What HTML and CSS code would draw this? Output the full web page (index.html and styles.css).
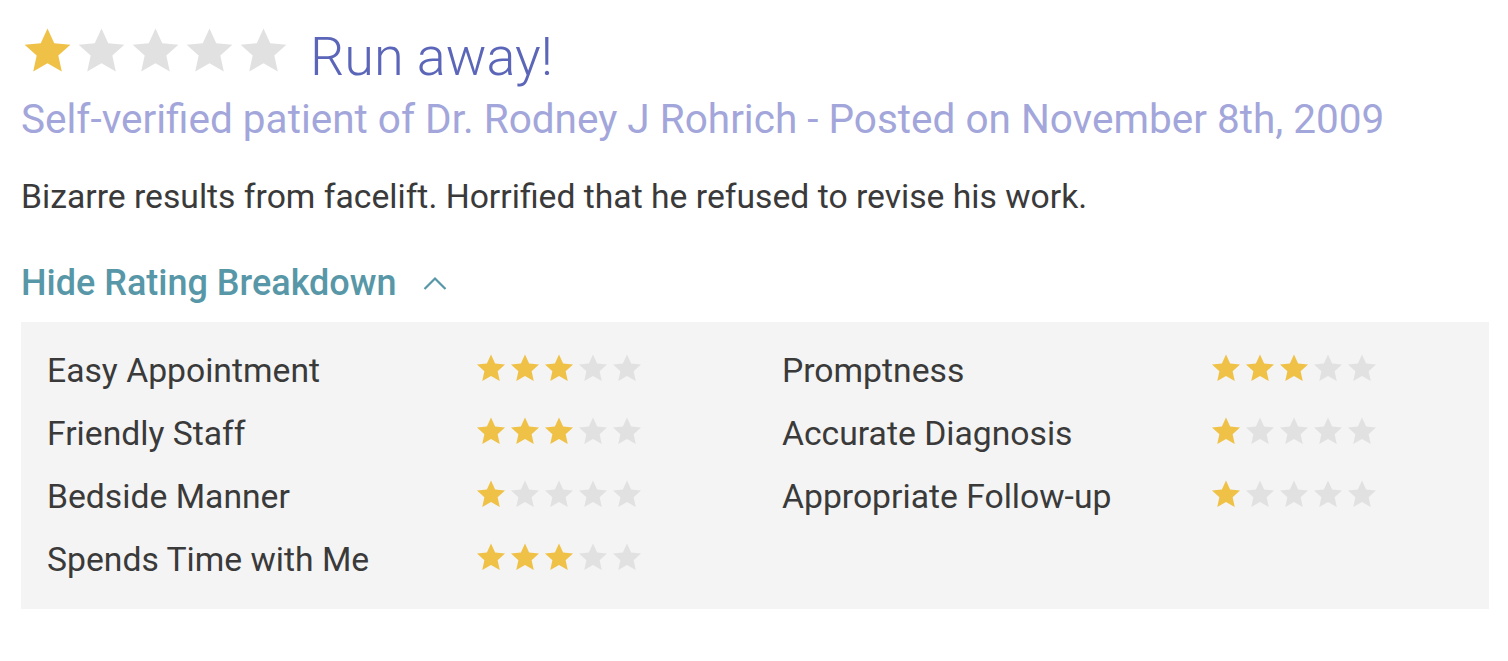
FILE: index.html
```html
<!DOCTYPE html>
<html>
<head>
<meta charset="utf-8">
<link rel="stylesheet" href="styles.css">
</head>
<body>
<svg width="0" height="0" class="defs">
  <defs>
    <symbol id="star" viewBox="0 0 24 24"><path d="M12 1.2l3.3 7.2 7.9.8-5.9 5.3 1.7 7.8L12 18.3l-7 4 1.7-7.8L.8 9.2l7.9-.8z"/></symbol>
  </defs>
</svg>
<div class="review">
  <div class="head">
    <div class="stars big">
      <svg class="on"><use href="#star"/></svg><svg><use href="#star"/></svg><svg><use href="#star"/></svg><svg><use href="#star"/></svg><svg><use href="#star"/></svg>
    </div>
    <h1 class="title">Run away!</h1>
  </div>
  <div class="meta">Self-verified patient of Dr. Rodney J Rohrich - Posted on November 8th, 2009</div>
  <p class="body">Bizarre results from facelift. Horrified that he refused to revise his work.</p>
  <div class="toggle">Hide Rating Breakdown
    <svg class="chev" width="24" height="14" viewBox="0 0 24 14"><path d="M1.5 13L12 2.5 22.5 13" fill="none" stroke="currentColor" stroke-width="2.2"/></svg>
  </div>
  <div class="breakdown">
    <div class="col">
      <div class="row"><span class="label">Easy Appointment</span><div class="stars small"><svg class="on"><use href="#star"/></svg><svg class="on"><use href="#star"/></svg><svg class="on"><use href="#star"/></svg><svg><use href="#star"/></svg><svg><use href="#star"/></svg></div></div>
      <div class="row"><span class="label">Friendly Staff</span><div class="stars small"><svg class="on"><use href="#star"/></svg><svg class="on"><use href="#star"/></svg><svg class="on"><use href="#star"/></svg><svg><use href="#star"/></svg><svg><use href="#star"/></svg></div></div>
      <div class="row"><span class="label">Bedside Manner</span><div class="stars small"><svg class="on"><use href="#star"/></svg><svg><use href="#star"/></svg><svg><use href="#star"/></svg><svg><use href="#star"/></svg><svg><use href="#star"/></svg></div></div>
      <div class="row"><span class="label">Spends Time with Me</span><div class="stars small"><svg class="on"><use href="#star"/></svg><svg class="on"><use href="#star"/></svg><svg class="on"><use href="#star"/></svg><svg><use href="#star"/></svg><svg><use href="#star"/></svg></div></div>
    </div>
    <div class="col">
      <div class="row"><span class="label">Promptness</span><div class="stars small"><svg class="on"><use href="#star"/></svg><svg class="on"><use href="#star"/></svg><svg class="on"><use href="#star"/></svg><svg><use href="#star"/></svg><svg><use href="#star"/></svg></div></div>
      <div class="row"><span class="label">Accurate Diagnosis</span><div class="stars small"><svg class="on"><use href="#star"/></svg><svg><use href="#star"/></svg><svg><use href="#star"/></svg><svg><use href="#star"/></svg><svg><use href="#star"/></svg></div></div>
      <div class="row"><span class="label">Appropriate Follow-up</span><div class="stars small"><svg class="on"><use href="#star"/></svg><svg><use href="#star"/></svg><svg><use href="#star"/></svg><svg><use href="#star"/></svg><svg><use href="#star"/></svg></div></div>
    </div>
  </div>
</div>
</body>
</html>
```
FILE: styles.css
```css
html, body { margin: 0; padding: 0; background: #fff; }
body { font-family: Roboto, "Liberation Sans", sans-serif; color: #3a3a3a; }
.defs { position: absolute; }
.review { padding: 22px 18px 0 21px; }
.head { display: flex; align-items: center; height: 70px; }
.stars { display: flex; }
.stars svg { fill: #e1e1e1; flex-shrink: 0; }
.stars svg.on { fill: #efc146; }
.stars.big { gap: 5px; margin: 0 0 14px 2px; }
.stars.big svg { width: 49px; height: 49px; }
.title { margin: 0 0 0 22px; font-size: 54px; font-weight: 300; color: #5b66b9; line-height: 1; }
.meta { font-size: 40.5px; color: #a3a6da; margin-top: 3px; line-height: 48px; white-space: nowrap; }
.body { font-size: 33.7px; margin: 34px 0 0 0; line-height: 40px; }
.toggle { font-size: 36px; font-weight: 500; color: #5797a7; margin-top: 46px; display: flex; align-items: center; line-height: 40px; }
.chev { margin-left: 26px; color: #5797a7; }
.breakdown { margin-top: 19px; background: #f4f4f4; display: flex; padding: 29px 0 29px 26px; width: 1442px; }
.col { width: 735px; flex-shrink: 0; display: flex; flex-direction: column; gap: 23px; }
.row { display: flex; align-items: center; height: 40px; }
.label { width: 429px; flex-shrink: 0; font-size: 33.7px; line-height: 40px; }
.stars.small { gap: 4px; margin-bottom: 6px; }
.stars.small svg { width: 30px; height: 30px; }
```
